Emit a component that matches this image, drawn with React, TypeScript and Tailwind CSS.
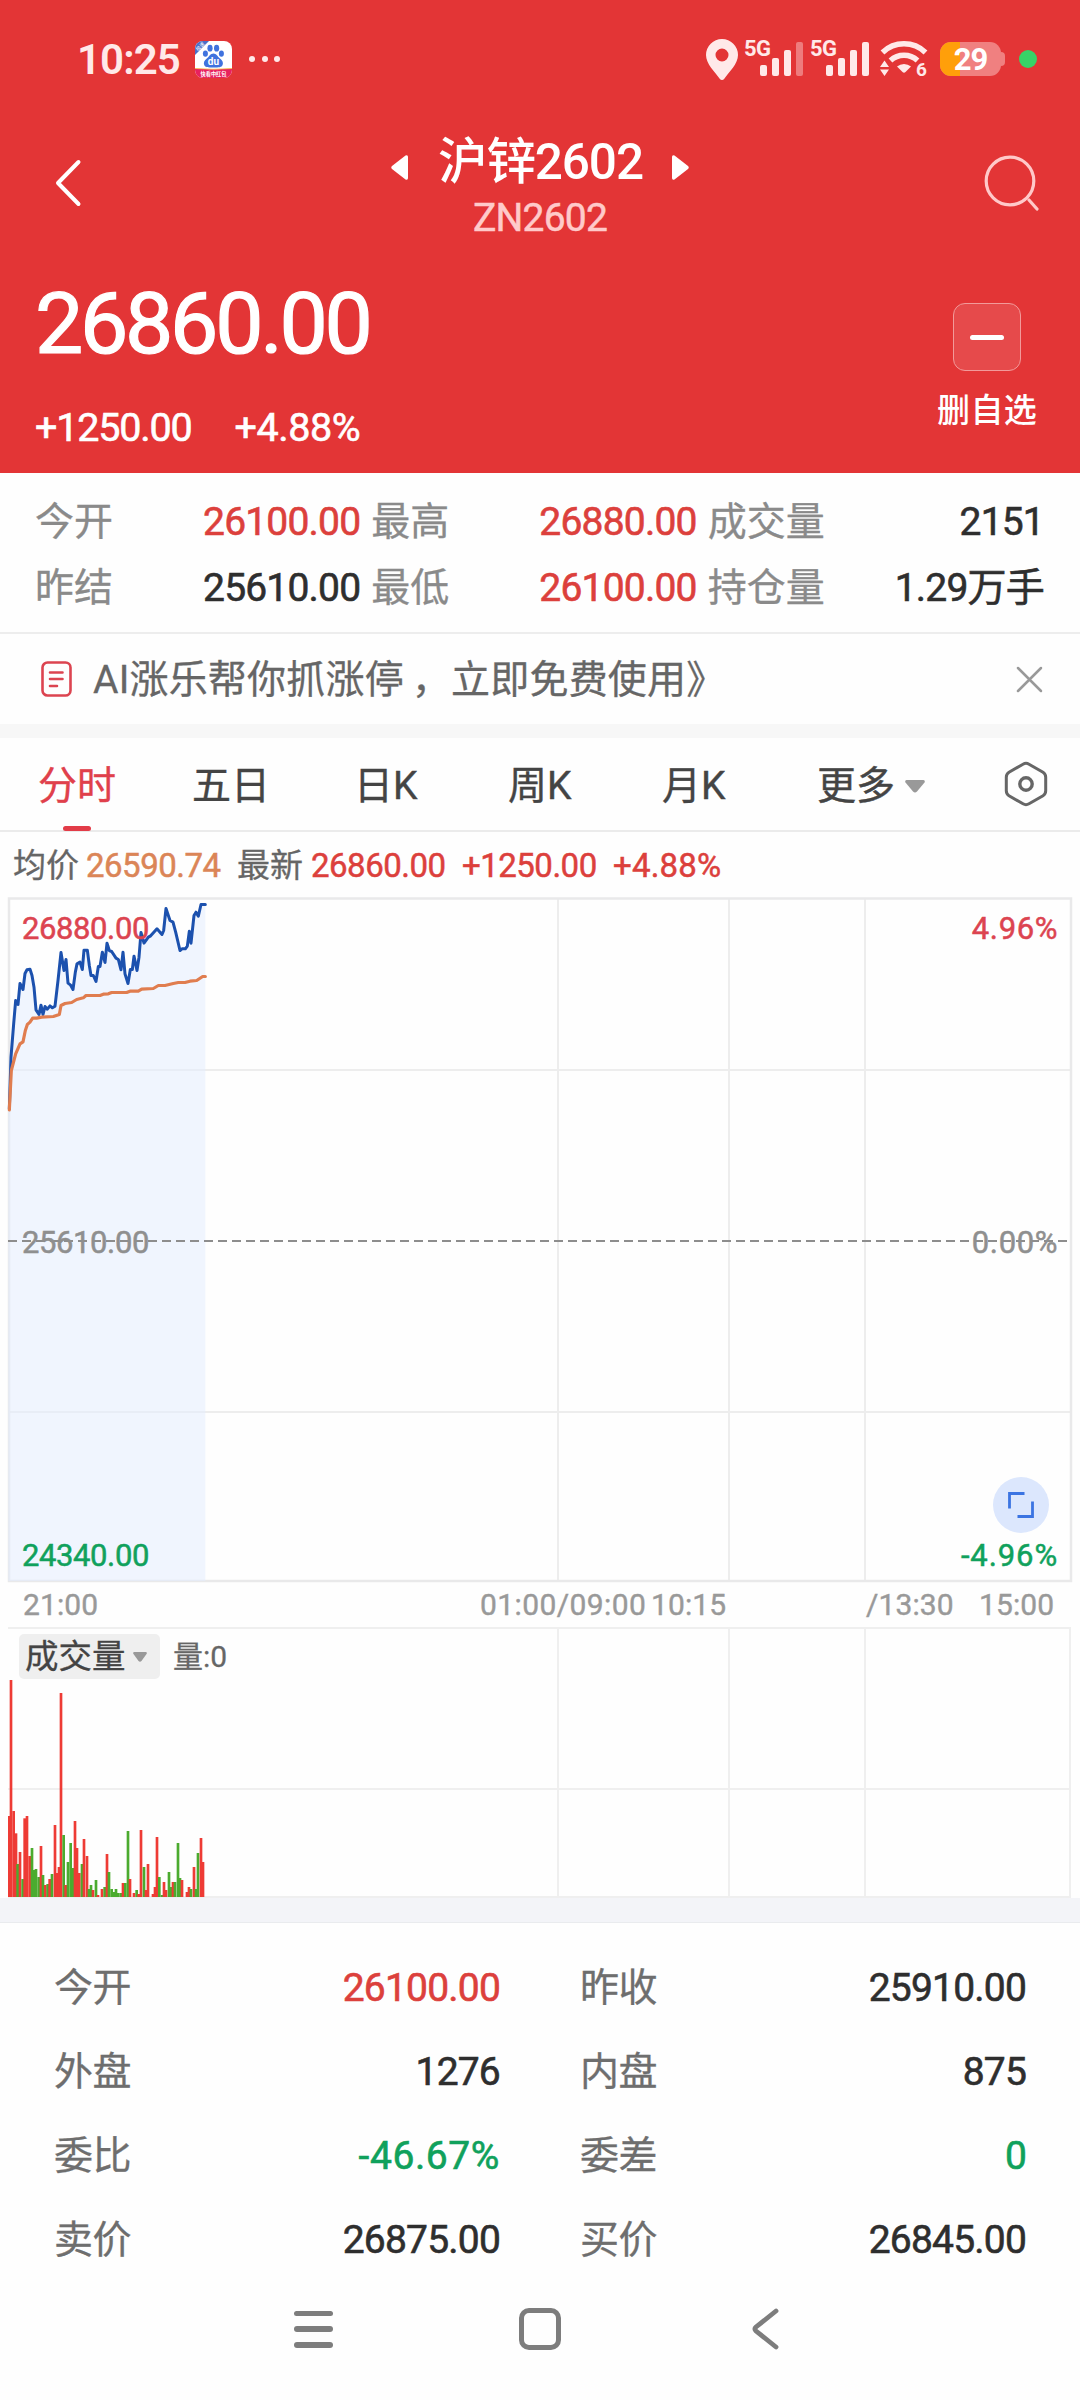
import clsx from "clsx";

type Tone = "up" | "down" | "flat";

const toneClass: Record<Tone, string> = {
  up: "text-[#dc403c]",
  down: "text-[#10a15c]",
  flat: "text-[#2e2e2e]",
};

const SUMMARY: { label: string; value: string; tone: Tone }[] = [
  { label: "今开", value: "26100.00", tone: "up" },
  { label: "最高", value: "26880.00", tone: "up" },
  { label: "成交量", value: "2151", tone: "flat" },
  { label: "昨结", value: "25610.00", tone: "flat" },
  { label: "最低", value: "26100.00", tone: "up" },
  { label: "持仓量", value: "1.29万手", tone: "flat" },
];

const DETAILS: { label: string; value: string; tone: Tone }[] = [
  { label: "今开", value: "26100.00", tone: "up" },
  { label: "昨收", value: "25910.00", tone: "flat" },
  { label: "外盘", value: "1276", tone: "flat" },
  { label: "内盘", value: "875", tone: "flat" },
  { label: "委比", value: "-46.67%", tone: "down" },
  { label: "委差", value: "0", tone: "down" },
  { label: "卖价", value: "26875.00", tone: "flat" },
  { label: "买价", value: "26845.00", tone: "flat" },
];

// chart series, in thirds of a pixel
const PRICE =
  "28,685 33,530 41,430 47,360 54,372 60,309 69,327 75,279 81,268 90,266 96,285 102,320 108,388 117,402 123,374 129,402 135,378 142,386 150,376 157,382 165,377 174,300 183,216 192,270 198,237 204,308 212,314 219,327 226,275 231,250 240,245 247,267 252,209 262,209 268,255 273,285 280,285 288,303 295,258 300,258 307,215 315,246 321,188 328,210 335,213 348,233 355,237 363,268 369,215 375,280 384,309 391,267 397,267 402,227 411,270 417,230 423,156 432,188 445,170 452,166 471,145 480,155 486,162 491,150 498,84 510,120 519,125 527,155 540,210 546,205 556,205 562,197 568,152 573,188 582,105 588,95 595,107 603,72 616,72";
const AVERAGE =
  "28,688 34,570 47,520 60,490 69,484 76,450 82,432 90,425 98,413 110,413 125,410 160,408 178,402 183,375 195,369 215,366 230,357 250,352 258,345 300,345 310,341 325,340 335,336 380,336 390,332 415,332 425,326 460,324 475,315 495,315 520,309 535,306 555,306 570,302 590,300 608,288 616,288";

// [x, top, rising]
const VOLUME: [number, number, 0 | 1][] = [
  [28, 528, 1], [33, 120, 1], [41, 513, 1], [48, 580, 1], [53, 672, 0],
  [60, 636, 1], [68, 717, 0], [74, 535, 1], [81, 528, 1], [89, 648, 1],
  [96, 624, 0], [102, 690, 0], [108, 687, 0], [116, 711, 0], [123, 618, 1],
  [129, 705, 0], [136, 735, 1], [143, 732, 0], [149, 717, 1], [156, 702, 0],
  [165, 555, 1], [171, 699, 1], [177, 681, 1], [183, 159, 1], [191, 585, 0],
  [197, 735, 1], [204, 666, 0], [212, 609, 0], [218, 684, 0], [225, 543, 1],
  [231, 624, 1], [238, 699, 1], [246, 672, 0], [252, 597, 1], [261, 648, 1],
  [267, 747, 0], [273, 735, 0], [279, 750, 1], [288, 720, 0], [294, 765, 1],
  [306, 747, 1], [314, 741, 0], [321, 642, 1], [327, 696, 0], [335, 747, 0],
  [342, 756, 0], [348, 747, 0], [354, 759, 0], [362, 759, 0], [369, 729, 1],
  [376, 729, 0], [384, 573, 0], [390, 717, 1], [402, 759, 1], [410, 750, 0],
  [416, 762, 1], [423, 570, 1], [432, 681, 0], [438, 750, 1], [444, 672, 1],
  [459, 762, 1], [465, 741, 1], [471, 591, 1], [478, 711, 0], [486, 765, 0],
  [492, 726, 1], [498, 750, 1], [507, 696, 0], [513, 741, 0], [519, 726, 1],
  [525, 726, 0], [534, 609, 0], [540, 714, 0], [546, 720, 1], [561, 756, 1],
  [567, 741, 1], [573, 747, 0], [582, 681, 1], [588, 747, 0], [594, 639, 0],
  [603, 594, 1], [609, 666, 1],
];

function Signal({ weak }: { weak?: boolean }) {
  return (
    <div className="relative w-[60px] h-[44px] shrink-0">
      <span className="absolute left-0 top-[1px] text-[22px] leading-none font-bold tracking-tight">
        5G
      </span>
      <svg className="w-full h-full" viewBox="0 0 60 44" fill="currentColor">
        <rect x="16" y="28" width="7" height="11" rx="2" />
        <rect x="28" y="21" width="7" height="18" rx="2" />
        <rect x="40" y="13" width="7" height="26" rx="2" />
        <rect x="52" y="5" width="7" height="34" rx="2" opacity={weak ? 0.4 : 1} />
      </svg>
    </div>
  );
}

function BaiduIcon() {
  return (
    <svg className="w-[37px] h-[37px] ml-[16px] overflow-visible" viewBox="0 0 37 37">
      <defs>
        <clipPath id="app">
          <rect width="37" height="37" rx="8" />
        </clipPath>
      </defs>
      <g clipPath="url(#app)">
        <rect width="37" height="37" fill="#fff" />
        <path d="M0 0h14L0 14z" fill="#4a6fc9" />
        <path d="M0 27.5q18.5 1.5 37 0V37H0z" fill="#e8215e" />
        <path d="M0 27.5q18.5 1.5 37 0" stroke="#f6c04a" strokeWidth=".8" fill="none" />
      </g>
      <g fill="#3f72de">
        <ellipse cx="15" cy="7.2" rx="2.6" ry="3.4" />
        <ellipse cx="21.6" cy="7.2" rx="2.6" ry="3.4" />
        <ellipse cx="10.4" cy="12.6" rx="2.5" ry="3.2" />
        <ellipse cx="26.4" cy="12.6" rx="2.5" ry="3.2" />
        <path d="M18.4 12.5c3 0 4.2 3 6.6 5 2.4 2 3.6 4 2.6 6.5-1 2.4-3.6 2.5-9.2 2.5s-8.2-.1-9.2-2.5c-1-2.5.2-4.5 2.6-6.5 2.4-2 3.6-5 6.6-5z" />
      </g>
      <text
        x="5.2"
        y="7.4"
        fontSize="5"
        fill="#fff"
        textAnchor="middle"
        transform="rotate(-45 5.2 5.6)"
      >
        极速
      </text>
      <text x="18.4" y="24.3" fontSize="10" fontWeight="700" fill="#fff" textAnchor="middle">
        du
      </text>
      <text x="18.5" y="34.5" fontSize="5.2" fontWeight="700" fill="#fff" textAnchor="middle">
        快看中红包
      </text>
    </svg>
  );
}

function StatusBar() {
  return (
    <div className="h-[118px] pl-[77px] pr-[43px] flex items-center justify-between text-[#ffe9e9]">
      <div className="flex items-center">
        <span className="text-[42px] leading-none font-semibold tracking-[-0.9px] w-[102px] mt-[1px]">
          10:25
        </span>
        <BaiduIcon />
        <div className="flex gap-[6.5px] ml-[17px]">
          <i className="w-[6px] h-[6px] rounded-full bg-[#ffe9e9]" />
          <i className="w-[6px] h-[6px] rounded-full bg-[#ffe9e9]" />
          <i className="w-[6px] h-[6px] rounded-full bg-[#ffe9e9]" />
        </div>
      </div>
      <div className="flex items-center">
        <svg className="w-[32px] h-[41px] mr-[6px]" viewBox="0 0 32 41" fill="currentColor">
          <path
            fillRule="evenodd"
            d="M16 0a16 16 0 0 0-16 16c0 9 9 17 13.5 23.5q2.5 3 5 0C23 33 32 25 32 16A16 16 0 0 0 16 0zm0 9.5a6.5 6.5 0 1 1 0 13 6.5 6.5 0 0 1 0-13z"
          />
        </svg>
        <Signal weak />
        <div className="w-[6px]" />
        <Signal />
        <svg className="w-[48px] h-[38px] ml-[10px] overflow-visible" viewBox="0 0 48 38">
          <g fill="none" stroke="currentColor" strokeWidth="5.5">
            <path d="M2.5 12.5a31 31 0 0 1 43 0" />
            <path d="M10.5 20.5a20 20 0 0 1 27 0" />
          </g>
          <path d="M17 26.5a11 11 0 0 1 14 0l-5.5 5.5q-1.5 1.5-3 0z" fill="currentColor" />
          <path d="M0 27l4.5-6.5L9 27zM0 29.5h9L4.5 36z" fill="currentColor" />
          <text x="36" y="36" fontSize="19" fontWeight="700" fill="currentColor">
            6
          </text>
        </svg>
        <div className="relative ml-[12px] w-[61px] h-[34px] rounded-[11px] bg-[#f08080] overflow-hidden flex items-center justify-center">
          <div className="absolute left-0 top-0 h-full w-[20px] bg-[#ff9f0a]" />
          <span className="relative text-[31px] leading-none font-bold tracking-[-1px] text-white">
            29
          </span>
        </div>
        <i className="w-[4px] h-[14px] rounded-r-[4px] bg-[#f08080]" />
        <i className="w-[18px] h-[18px] ml-[14px] rounded-full bg-[#37d367]" />
      </div>
    </div>
  );
}

function Header() {
  return (
    <header className="h-[473px] bg-[#e33536] text-white">
      <StatusBar />
      <div className="h-[134px] pl-[54px] pr-[40px] flex items-center justify-between">
        <svg className="w-[28px] h-[48px] mb-[4px]" viewBox="0 0 28 48" fill="none">
          <path
            d="M24.5 3L4 24l20.5 21"
            stroke="#fff"
            strokeWidth="4"
            strokeLinecap="round"
            strokeLinejoin="round"
          />
        </svg>
        <div className="flex flex-col items-center pl-[14px] pt-[3px]">
          <div className="flex items-center h-[64px]">
            <svg className="w-[17px] h-[25px] mt-[11px]" viewBox="0 0 17 25" fill="#fff">
              <path d="M17 2v21q0 2.5-2.5 1.5L1 14q-1.5-1.5 0-3L14.5.5Q17-.5 17 2z" />
            </svg>
            <h1 className="mx-[30px] w-[204px] whitespace-nowrap text-[49.5px] leading-[64px] font-medium tracking-[-1.1px] text-center">
              沪锌2602
            </h1>
            <svg
              className="w-[17px] h-[25px] mt-[11px] rotate-180"
              viewBox="0 0 17 25"
              fill="#fff"
            >
              <path d="M17 2v21q0 2.5-2.5 1.5L1 14q-1.5-1.5 0-3L14.5.5Q17-.5 17 2z" />
            </svg>
          </div>
          <p className="text-[39px] leading-[49px] tracking-[-0.8px] [-webkit-text-stroke:0.5px] text-[#ffcaca]">
            ZN2602
          </p>
        </div>
        <svg className="w-[56px] h-[56px] mb-[5px]" viewBox="0 0 56 56" fill="none">
          <g stroke="#ffc9c9" strokeWidth="3.2" strokeLinecap="round">
            <circle cx="26" cy="26" r="23.8" />
            <path d="M45 45l8 9" />
          </g>
        </svg>
      </div>
      <div className="h-[221px] pl-[35px] pr-[43px] flex justify-between">
        <div className="flex flex-col">
          <div className="mt-[29px] h-[86px] text-[86px] leading-[86px] tracking-[-3.3px] [-webkit-text-stroke:1.2px]">
            26860.00
          </div>
          <div className="mt-[37px] flex gap-[43px] text-[39.5px] leading-[48px] tracking-[-1.2px] [-webkit-text-stroke:0.6px]">
            <span>+1250.00</span>
            <span className="tracking-[-0.4px]">+4.88%</span>
          </div>
        </div>
        <div className="flex flex-col items-center mt-[51px]">
          <button className="w-[68px] h-[68px] rounded-[12px] border border-[#f29a9a] bg-[#e64a4b] flex items-center justify-center">
            <i className="w-[34px] h-[5px] rounded-full bg-white" />
          </button>
          <span className="mt-[18px] text-[33px] leading-[44px] font-medium tracking-[0.3px]">
            删自选
          </span>
        </div>
      </div>
    </header>
  );
}

function Summary() {
  return (
    <section className="h-[161px] pt-[16px] pl-[35px] pr-[36px] grid grid-cols-3 auto-rows-[66px] border-b-2 border-[#ededed]">
      {SUMMARY.map((s, i) => (
        <div
          key={i}
          className={clsx(
            "flex items-center justify-between text-[39px] leading-[66px] whitespace-nowrap",
            i % 3 !== 2 && "pr-[11px]"
          )}
        >
          <span className="text-[#8a8a8a] [-webkit-text-stroke:0.3px]">{s.label}</span>
          <span
            className={clsx("tracking-[-0.8px] [-webkit-text-stroke:0.6px]", toneClass[s.tone])}
          >
            {s.value}
          </span>
        </div>
      ))}
    </section>
  );
}

function Notice() {
  return (
    <section className="h-[90px] pl-[41px] pr-[37px] flex items-center">
      <svg className="w-[31px] h-[36px]" viewBox="0 0 31 36" fill="none">
        <g stroke="#dc4450" strokeWidth="2.6" strokeLinecap="round">
          <rect x="1.5" y="1.5" width="28" height="33" rx="5" />
          <path d="M9 11.5h12.5M9 18h12.5M9 25h7" />
        </g>
      </svg>
      <p className="ml-[21px] mt-[2px] text-[39px] leading-[52px] tracking-[0.2px] [-webkit-text-stroke:0.3px] text-[#666] whitespace-nowrap">
        AI涨乐帮你抓涨停<span className="ml-[8px]">，</span>立即免费使用》
      </p>
      <svg className="ml-auto w-[27px] h-[27px]" viewBox="0 0 27 27">
        <path d="M2 2l23 23M25 2L2 25" stroke="#999" strokeWidth="2.5" strokeLinecap="round" />
      </svg>
    </section>
  );
}

function Tabs() {
  return (
    <nav className="h-[94px] pl-[38px] pr-[32px] flex items-center text-[39px] leading-[52px] text-[#444] border-b-2 border-[#ebebeb] whitespace-nowrap [-webkit-text-stroke:0.4px]">
      <div className="relative w-[154px] pt-[4px] text-[#e0404b]">
        分时
        <i className="absolute left-[25px] top-[70px] w-[28px] h-[5px] rounded-full bg-[#e23c48]" />
      </div>
      <div className="w-[162px] pt-[4px]">五日</div>
      <div className="w-[154px] pt-[4px]">日K</div>
      <div className="w-[154px] pt-[4px]">周K</div>
      <div className="w-[155px] pt-[4px]">月K</div>
      <div className="flex items-center pt-[4px]">
        更多
        <svg className="ml-[10px] w-[20px] h-[13px]" viewBox="0 0 20 13">
          <path d="M1.5 0h17q2 .5 1 2.5L12 11.5q-2 2-4 0L.5 2.5Q-.5.5 1.5 0z" fill="#999" />
        </svg>
      </div>
      <svg className="ml-auto w-[44px] h-[46px]" viewBox="0 0 44 46" fill="none">
        <g stroke="#666" strokeWidth="3">
          <path d="M19 3.2q3-1.8 6 0l14 8q2.7 1.8 2.7 5v13.6q0 3.2-2.7 5l-14 8q-3 1.8-6 0l-14-8q-2.7-1.8-2.7-5V16.2q0-3.2 2.7-5z" />
          <circle cx="22" cy="23" r="6.2" strokeWidth="3.4" />
        </g>
      </svg>
    </nav>
  );
}

function Quote() {
  return (
    <div className="h-[64px] pl-[13px] pt-[3px] flex items-center text-[33px] leading-[44px] whitespace-nowrap text-[#dc403c] tracking-[-0.5px] [-webkit-text-stroke:0.5px]">
      <span className="text-[#666] w-[73px] tracking-normal [-webkit-text-stroke:0.3px]">均价</span>
      <span className="w-[151px] text-[#db8557]">26590.74</span>
      <span className="text-[#666] w-[74px] tracking-normal [-webkit-text-stroke:0.3px]">最新</span>
      <span className="w-[151px]">26860.00</span>
      <span className="w-[151px]">+1250.00</span>
      <span className="tracking-[0.2px]">+4.88%</span>
    </div>
  );
}

function PriceChart() {
  return (
    <div className="relative h-[688px] text-[31px] leading-[36px] tracking-[-0.4px] [-webkit-text-stroke:0.5px]">
      <svg className="block w-full h-full" viewBox="0 0 1080 688">
        <g fill="none" stroke="#ededed" strokeWidth="2">
          <path d="M558 2v682M729 2v682M865 2v682M8 174h1063M8 516h1063" />
          <rect x="9" y="2.5" width="1062" height="682.5" strokeWidth="2.5" stroke="#e9e9ea" />
        </g>
        <g transform="translate(0 -15) scale(.33333)">
          <polygon
            points={`25,688 ${PRICE} 616,2100 25,2100`}
            fill="#e4edfe"
            fillOpacity=".55"
          />
        </g>
        <path d="M8 345h1063" stroke="#8d8d8d" strokeWidth="2" strokeDasharray="9 5" />
        <g
          transform="translate(0 -15.5) scale(.33333)"
          fill="none"
          strokeWidth="9"
          strokeLinejoin="round"
          strokeLinecap="round"
        >
          <polyline points={PRICE} stroke="#1c51ae" />
          <polyline points={AVERAGE} stroke="#e07d4f" strokeWidth="9.5" />
        </g>
      </svg>
      <div className="absolute inset-0 pl-[22px] pr-[22px] pt-[15px] pb-[10px] flex flex-col justify-between">
        <div className="flex justify-between text-[#dc4450]">
          <span>26880.00</span>
          <span className="tracking-[0.6px]">4.96%</span>
        </div>
        <div className="flex justify-between text-[#8f8f8f]">
          <span>25610.00</span>
          <span className="tracking-[0.6px]">0.00%</span>
        </div>
        <div className="flex justify-between text-[#10a15c]">
          <span>24340.00</span>
          <span className="tracking-[0.9px]">-4.96%</span>
        </div>
      </div>
      <button className="absolute right-[31px] bottom-[51px] w-[56px] h-[56px] rounded-full bg-[#dce7fd] flex items-center justify-center">
        <svg className="w-[28px] h-[28px]" viewBox="0 0 28 28" fill="none">
          <path d="M17.5 2.5H2.5v15M10.5 25.5h15v-15" stroke="#3b74e2" strokeWidth="2.8" />
        </svg>
      </button>
    </div>
  );
}

function TimeAxis() {
  return (
    <div className="h-[42px] pl-[23px] flex items-center text-[30px] leading-[36px] tracking-[0.1px] [-webkit-text-stroke:0.4px] text-[#999] whitespace-nowrap">
      <span className="w-[457px]">21:00</span>
      <span className="w-[171px] tracking-[0.4px]">01:00/09:00</span>
      <span className="w-[215px]">10:15</span>
      <span className="w-[113px]">/13:30</span>
      <span>15:00</span>
    </div>
  );
}

function VolumeChart() {
  return (
    <div className="relative h-[272px]">
      <svg className="block w-full h-full" viewBox="0 0 1080 272">
        <path
          d="M8 2h1063M558 2v269M729 2v269M865 2v269M8 163h1063M8 271h1063M1070 2v269"
          stroke="#efefef"
          strokeWidth="2"
        />
        <g transform="translate(0 14) scale(.33333)">
          {VOLUME.map(([x, top, rising]) => (
            <rect
              key={x}
              x={x - 4}
              y={top}
              width={8}
              height={771 - top}
              fill={rising ? "#ee3b35" : "#4bab2f"}
            />
          ))}
        </g>
      </svg>
      <div className="absolute left-[19px] top-[8px] flex items-center [-webkit-text-stroke:0.3px]">
        <div className="w-[141px] h-[45px] pl-[6px] rounded-[5px] bg-[#efefef] flex items-center text-[33.5px] leading-[45px] text-[#444]">
          成交量
          <svg className="ml-[7px] w-[14px] h-[10px]" viewBox="0 0 14 10">
            <path d="M1 0h12q1.5.5.5 2L8.5 9Q7 10.5 5.5 9L.5 2Q-.5.5 1 0z" fill="#999" />
          </svg>
        </div>
        <span className="ml-[13px] text-[30px] leading-[40px] text-[#666]">量:0</span>
      </div>
    </div>
  );
}

function Details() {
  return (
    <section className="h-[353px] pt-[23px] pl-[54px] pr-[54px] grid grid-cols-2 gap-x-[80px] auto-rows-[84px]">
      {DETAILS.map((d) => (
        <div
          key={d.label}
          className="flex items-center justify-between text-[39px] leading-[84px]"
        >
          <span className="text-[#6e6e6e] tracking-[-0.5px] [-webkit-text-stroke:0.3px]">
            {d.label}
          </span>
          <span
            className={clsx(
              "[-webkit-text-stroke:0.6px]",
              d.value.endsWith("%") ? "tracking-[0.6px]" : "tracking-[-0.8px]",
              toneClass[d.tone]
            )}
          >
            {d.value}
          </span>
        </div>
      ))}
    </section>
  );
}

function NavBar() {
  return (
    <footer className="grow flex items-start justify-between pl-[294px] pr-[301px] pt-[32px]">
      <div className="w-[39px] h-[42px] flex flex-col justify-between py-[2.5px]">
        <i className="h-[5.5px] rounded-full bg-[#7d7d7d]" />
        <i className="h-[5.5px] rounded-full bg-[#7d7d7d]" />
        <i className="h-[5.5px] rounded-full bg-[#7d7d7d]" />
      </div>
      <div className="w-[42px] h-[42px] mr-[5px] rounded-[10px] border-[5px] border-[#7d7d7d]" />
      <svg className="w-[28px] h-[42px]" viewBox="0 0 28 42" fill="none">
        <path
          d="M25 3L5 19q-2 2 0 4l20 16"
          stroke="#7d7d7d"
          strokeWidth="4.8"
          strokeLinecap="round"
        />
      </svg>
    </footer>
  );
}

export default function App() {
  return (
    <div className="w-[1080px] h-[2400px] flex flex-col bg-[#fefefe] font-[Roboto,'Noto_Sans_CJK_SC',sans-serif] overflow-hidden">
      <Header />
      <Summary />
      <Notice />
      <div className="h-[14px] bg-[#f7f7f7]" />
      <Tabs />
      <Quote />
      <PriceChart />
      <TimeAxis />
      <VolumeChart />
      <div className="h-[25px] bg-[#f3f4f8] border-b border-[#e9ebee]" />
      <Details />
      <NavBar />
    </div>
  );
}
